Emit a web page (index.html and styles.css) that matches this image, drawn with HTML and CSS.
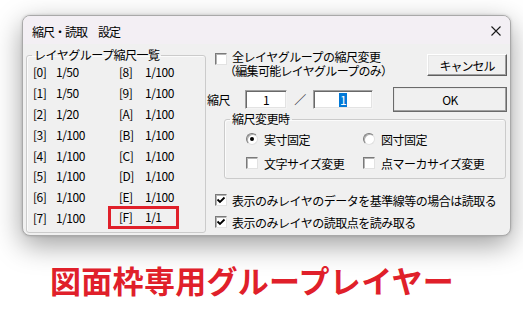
FILE: index.html
```html
<!DOCTYPE html>
<html lang="ja">
<head>
<meta charset="utf-8">
<title>縮尺・読取 設定</title>
<link rel="stylesheet" href="styles.css">
</head>
<body>
<div class="desk">
  <div class="dialog">
    <div class="titlebar">
      <span class="title">縮尺・読取　設定</span>
      <svg class="close" width="10" height="10" viewBox="0 0 10 10"><path d="M0.5 0.5 L9.5 9.5 M9.5 0.5 L0.5 9.5" stroke="#1a1a1a" stroke-width="1.1" fill="none"/></svg>
    </div>
    <div class="body">
      <fieldset class="group list">
        <legend>レイヤグループ縮尺一覧</legend>
        <div class="grid">
          <span>[0]</span><span>1/50</span><span>[8]</span><span>1/100</span>
          <span>[1]</span><span>1/50</span><span>[9]</span><span>1/100</span>
          <span>[2]</span><span>1/20</span><span>[A]</span><span>1/100</span>
          <span>[3]</span><span>1/100</span><span>[B]</span><span>1/100</span>
          <span>[4]</span><span>1/100</span><span>[C]</span><span>1/100</span>
          <span>[5]</span><span>1/100</span><span>[D]</span><span>1/100</span>
          <span>[6]</span><span>1/100</span><span>[E]</span><span>1/100</span>
          <span>[7]</span><span>1/100</span><div class="mark"><span class="mk">[F]</span><span>1/1</span></div>
        </div>
      </fieldset>
      <div class="right">
        <div class="r1">
          <span class="cb"></span>
          <div class="lbl">
            <div class="l1">全レイヤグループの縮尺変更</div>
            <div class="paren">（編集可能レイヤグループのみ）</div>
          </div>
          <div class="btn cancel">キャンセル</div>
        </div>
        <div class="r2">
          <span class="lab">縮尺</span>
          <div class="edit e1">1</div>
          <span class="slash">／</span>
          <div class="edit e2"><span class="sel">1</span></div>
          <div class="btn ok">OK</div>
        </div>
        <fieldset class="group chg">
          <legend>縮尺変更時</legend>
          <div class="opts">
            <div class="opt"><span class="rd on"></span><span>実寸固定</span></div>
            <div class="opt"><span class="rd"></span><span>図寸固定</span></div>
            <div class="opt"><span class="cb"></span><span>文字サイズ変更</span></div>
            <div class="opt"><span class="cb"></span><span>点マーカサイズ変更</span></div>
          </div>
        </fieldset>
        <div class="chk first">
          <span class="cb checked"><svg width="10" height="10" viewBox="0 0 10 10"><path d="M1.5 4.5 L4 7 L8.5 2.5" stroke="#000" stroke-width="1.8" fill="none"/></svg></span>
          <span>表示のみレイヤのデータを基準線等の場合は読取る</span>
        </div>
        <div class="chk">
          <span class="cb checked"><svg width="10" height="10" viewBox="0 0 10 10"><path d="M1.5 4.5 L4 7 L8.5 2.5" stroke="#000" stroke-width="1.8" fill="none"/></svg></span>
          <span>表示のみレイヤの読取点を読み取る</span>
        </div>
      </div>
    </div>
  </div>
  <p class="caption">図面枠専用グループレイヤー</p>
</div>
</body>
</html>
```
FILE: styles.css
```css
html, body {
  margin: 0;
  padding: 0;
  background: #ffffff;
}
.desk {
  width: 523px;
  height: 330px;
  overflow: hidden;
  padding: 15px 0 0 22px;
  box-sizing: border-box;
  font-family: "Noto Sans CJK JP", "Noto Sans", sans-serif;
  font-size: 12px;
  color: #000;
}
.dialog {
  width: 489px;
  box-sizing: border-box;
  border: 1px solid #a9a9a9;
  border-radius: 8px;
  background: #f0f0f0;
  overflow: hidden;
  box-shadow: 0 9px 28px rgba(0, 0, 0, 0.38), 0 0 3px rgba(0, 0, 0, 0.18);
}
.titlebar {
  height: 28px;
  background: #f3eff4;
  display: flex;
  align-items: center;
  padding-left: 9px;
}
.title {
  letter-spacing: -1px;
  line-height: 14px;
  margin-top: 3px;
  flex: 1;
}
.close {
  margin: 1px 9px 0 0;
}
.body {
  display: flex;
  padding: 4px 0 2px 3px;
  letter-spacing: -0.5px;
}
.group {
  margin: 0;
  min-width: 0;
  border: 1px solid #cbcbcb;
  border-radius: 3px;
  box-shadow: inset 1px 1px 0 #fbfbfb;
}
.group legend {
  line-height: 14px;
  padding: 0 2px;
  margin-left: -1px;
}
.list {
  width: 180px;
  box-sizing: border-box;
  padding: 0 0 0 6px;
}
.grid {
  display: grid;
  grid-template-columns: 23px 63px 26px auto;
  grid-auto-rows: 20.8px;
  align-items: center;
  line-height: 16px;
}
.mark {
  grid-column: 3 / 5;
  display: flex;
  align-items: center;
  width: 71px;
  height: 23px;
  box-sizing: border-box;
  margin-left: -11px;
  padding-left: 8px;
  border: 3px solid #e0202a;
  margin-top: -1px;
}
.mk {
  width: 26px;
}
.right {
  flex: 1;
  display: flex;
  flex-direction: column;
}
.r1 {
  display: flex;
  margin-top: 3px;
}
.cb {
  width: 12px;
  height: 12px;
  box-sizing: border-box;
  background: #fff;
  border: 1px solid;
  border-color: #7a7a7a #e2e2e2 #e2e2e2 #7a7a7a;
  box-shadow: inset 1px 1px 0 #b4b4b4;
  flex: none;
  display: flex;
  align-items: center;
  justify-content: center;
}
.r1 .cb {
  margin: 2px 0 0 9px;
}
.lbl {
  margin-left: 5px;
  line-height: 14px;
  display: flex;
  flex-direction: column;
  font-family: "Liberation Sans", "Noto Sans CJK JP", sans-serif;
}
.l1 {
  height: 14px;
}
.paren {
  margin-left: -8px;
  height: 14px;
  letter-spacing: -0.7px;
}
.btn {
  box-sizing: border-box;
  display: flex;
  align-items: center;
  justify-content: center;
  background: #f0f0f0;
  border: 1px solid;
  border-color: #ffffff #5f5f5f #5f5f5f #ffffff;
  box-shadow: inset -1px -1px 0 #a0a0a0, inset 1px 1px 0 #e6e6e6;
}
.cancel {
  width: 80px;
  height: 22px;
  margin: 3px 3px 0 auto;
  letter-spacing: -1px;
}
.r2 {
  display: flex;
  align-items: center;
  height: 25px;
  margin-top: 8px;
}
.lab {
  width: 38px;
  margin-left: 1px;
}
.edit {
  height: 19px;
  box-sizing: border-box;
  background: #fff;
  border: 1px solid;
  border-color: #a0a0a0 #f4f4f4 #f4f4f4 #a0a0a0;
  box-shadow: inset 1px 1px 0 #696969, inset -1px -1px 0 #e3e3e3;
  display: flex;
  align-items: center;
  justify-content: center;
  line-height: 14px;
}
.e1 {
  width: 42px;
}
.e2 {
  width: 60px;
}
.sel {
  background: #0078d7;
  color: #fff;
  padding: 0 1px;
}
.slash {
  width: 26px;
  text-align: center;
  color: #333;
}
.ok {
  width: 114px;
  height: 25px;
  margin: 0 3px 0 20px;
  outline: 1px solid #6a6a6a;
  outline-offset: -1px;
  border-color: #ffffff #4a4a4a #4a4a4a #ffffff;
}
.chg {
  margin: 0 4px 0 18px;
  padding: 2px 0 4px 21px;
}
.chg legend {
  margin-left: -16px;
}
.opts {
  display: grid;
  grid-template-columns: 117px auto;
  grid-auto-rows: 22px;
  row-gap: 2px;
  align-items: center;
}
.opt {
  display: flex;
  align-items: center;
  gap: 6px;
}
.rd {
  width: 12px;
  height: 12px;
  box-sizing: border-box;
  border-radius: 50%;
  background: #fff;
  border: 1px solid;
  border-color: #7a7a7a #e0e0e0 #e0e0e0 #7a7a7a;
  box-shadow: inset 1px 1px 0 #b0b0b0;
  display: flex;
  align-items: center;
  justify-content: center;
  flex: none;
}
.rd.on::after {
  content: "";
  width: 4px;
  height: 4px;
  border-radius: 50%;
  background: #000;
}
.chk {
  display: flex;
  align-items: center;
  height: 22px;
  padding-left: 9px;
  gap: 5px;
}
.chk.first {
  margin-top: 10px;
}
.caption {
  margin: 28px 0 0 28px;
  font-size: 31px;
  line-height: 31px;
  font-weight: 700;
  color: #e0202a;
  letter-spacing: 0.3px;
}
```
